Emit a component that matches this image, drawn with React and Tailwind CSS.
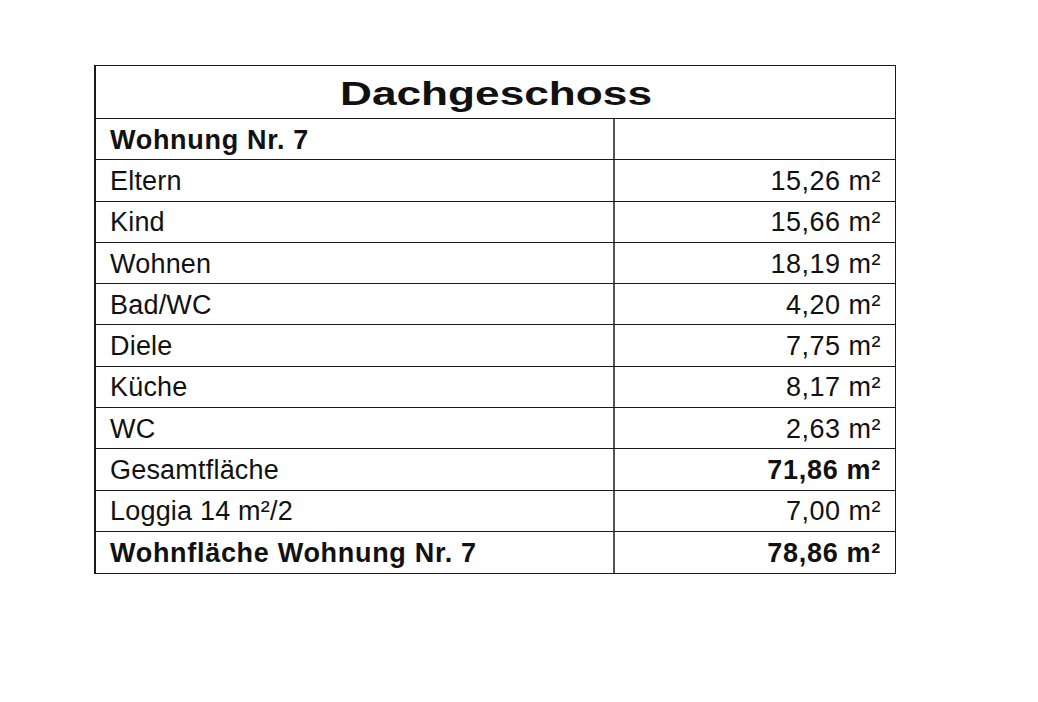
import React from 'react';

const rows = [
  { label: 'Wohnung Nr. 7', value: '', bold: true },
  { label: 'Eltern', value: '15,26 m²' },
  { label: 'Kind', value: '15,66 m²' },
  { label: 'Wohnen', value: '18,19 m²' },
  { label: 'Bad/WC', value: '4,20 m²' },
  { label: 'Diele', value: '7,75 m²' },
  { label: 'Küche', value: '8,17 m²' },
  { label: 'WC', value: '2,63 m²' },
  { label: 'Gesamtfläche', value: '71,86 m²', boldValue: true },
  { label: 'Loggia 14 m²/2', value: '7,00 m²' },
  { label: 'Wohnfläche Wohnung Nr. 7', value: '78,86 m²', bold: true, boldValue: true },
];

export default function App() {
  return (
    <div className="min-h-[702px] bg-white pt-[65px] pl-[94px] text-[#111] font-['Liberation_Sans',Arial,sans-serif]">
      <div className="w-[802px] border-t border-r border-b border-l-2 border-[#1a1a1a]">
        {/* Title */}
        <div className="h-[53px] border-b border-[#1a1a1a] flex items-center justify-center">
          <span className="inline-block text-[34px] leading-none font-bold scale-x-[1.3] translate-y-[1px]">
            Dachgeschoss
          </span>
        </div>

        {rows.map((r, i) => (
          <div
            key={r.label}
            className={
              'grid grid-cols-[519px_1fr] h-[41.3px] text-[27px] leading-none ' +
              (i < rows.length - 1 ? 'border-b border-[#1a1a1a]' : '')
            }
          >
            <div
              className={
                'flex items-center pl-[14px] border-r-2 border-[#555] pt-[2px] ' +
                (r.bold ? 'font-bold tracking-[0.7px]' : 'tracking-[0.2px]')
              }
            >
              {r.label}
            </div>
            <div
              className={
                'flex items-center justify-end pr-[14px] pt-[2px] ' +
                (r.boldValue ? 'font-bold tracking-[0.7px]' : 'tracking-[0.5px]')
              }
            >
              {r.value}
            </div>
          </div>
        ))}
      </div>
    </div>
  );
}
